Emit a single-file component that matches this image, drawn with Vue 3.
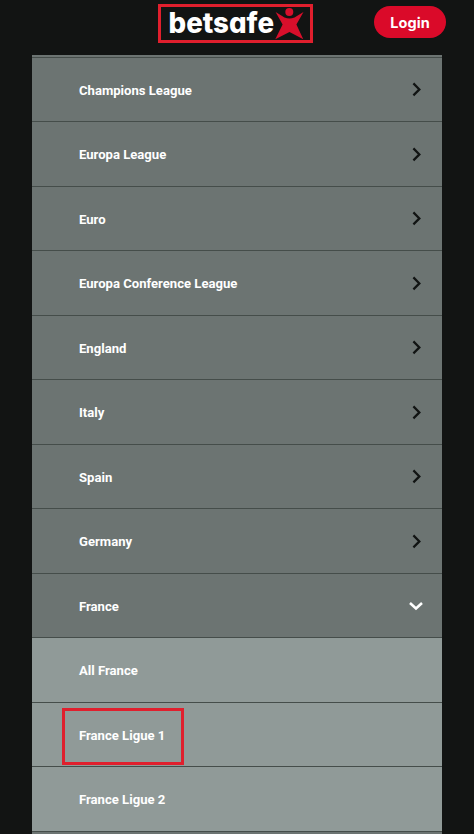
<script setup>
import { ref } from 'vue'

const leagues = [
  { name: 'Champions League' },
  { name: 'Europa League' },
  { name: 'Euro' },
  { name: 'Europa Conference League' },
  { name: 'England' },
  { name: 'Italy' },
  { name: 'Spain' },
  { name: 'Germany' },
  { name: 'France', children: ['All France', 'France Ligue 1', 'France Ligue 2'] }
]

const opened = ref('France')
const marked = 'France Ligue 1'

function toggle(name) {
  opened.value = opened.value === name ? '' : name
}
</script>

<template>
  <div class="page">
    <header class="header">
      <div class="logo">
        <svg width="149" height="33" viewBox="161 7 149 33">
          <text class="logo-text" x="168.5" y="32.7" textLength="105.5" lengthAdjust="spacingAndGlyphs">betsafe</text>
          <circle cx="289.3" cy="12" r="4" fill="#d80f2b" />
          <path
            d="M275.6 12 L284.5 17.6 Q289.5 19.4 294.5 17.6 L303.5 12 L296.4 24.5 L303.3 39.2 L289.5 32 L275.3 39.2 L282.6 24.5 Z"
            fill="#d80f2b"
          />
        </svg>
      </div>
      <button class="login-btn">Login</button>
    </header>

    <main class="list">
      <template v-for="item in leagues" :key="item.name">
        <div class="row" @click="toggle(item.name)">
          <span>{{ item.name }}</span>
          <svg v-if="opened === item.name" class="arrow down" width="16" height="16" viewBox="0 0 16 16">
            <path d="M2 5 L8 10.4 L14 5" />
          </svg>
          <svg v-else class="arrow" width="16" height="16" viewBox="0 0 16 16">
            <path d="M5.4 1.4 L11.4 7.4 L5.4 13.4" />
          </svg>
        </div>
        <template v-if="opened === item.name">
          <div v-for="child in item.children" :key="child" class="row sub">
            <span :class="{ marked: child === marked }">{{ child }}</span>
          </div>
        </template>
      </template>
      <div class="row"></div>
    </main>
  </div>
</template>

<style>
body {
  margin: 0;
  background: #121413;
}
</style>

<style scoped>
.page {
  height: 834px;
  overflow: hidden;
  display: flex;
  flex-direction: column;
  background: #121413;
  font-family: Roboto, sans-serif;
}

.header {
  box-sizing: border-box;
  height: 55px;
  flex: none;
  display: flex;
  justify-content: space-between;
  align-items: flex-start;
  padding: 4px 28px 0 158px;
}

.logo {
  display: flex;
  border: 3px solid #e01f2d;
}

.logo-text {
  font-family: Inter, sans-serif;
  font-size: 28px;
  font-weight: 800;
  font-feature-settings: 'cv11';
  fill: #fff;
}

.login-btn {
  width: 72px;
  height: 32px;
  margin-top: 2px;
  padding: 1px 0 0;
  border: none;
  border-radius: 16px;
  background: #da0a29;
  color: #fff;
  font-family: Inter, sans-serif;
  font-size: 14.5px;
  font-weight: 700;
  line-height: 32px;
  letter-spacing: 0.1px;
  cursor: pointer;
}

.list {
  box-sizing: border-box;
  flex: 1;
  width: 410.5px;
  margin-left: 31.5px;
  padding-top: 1.6px;
  overflow: hidden;
  background: #6c7472;
}

.row {
  box-sizing: border-box;
  height: 64.5px;
  display: flex;
  justify-content: space-between;
  align-items: center;
  padding: 2px 18.5px 0 47.5px;
  border-top: 1px solid #454d4a;
  background: #6c7472;
  color: #fff;
  font-size: 13.1px;
  font-weight: 700;
}

.sub {
  background: #909a98;
}

.marked {
  padding: 17px 16px 19px 14px;
  margin: 2px 0 0 -17px;
  border: 3px solid #e01f2d;
}

.arrow {
  fill: none;
  stroke: #111413;
  stroke-width: 2.2;
}

.arrow.down {
  stroke: #fff;
  stroke-width: 2.6;
}
</style>
